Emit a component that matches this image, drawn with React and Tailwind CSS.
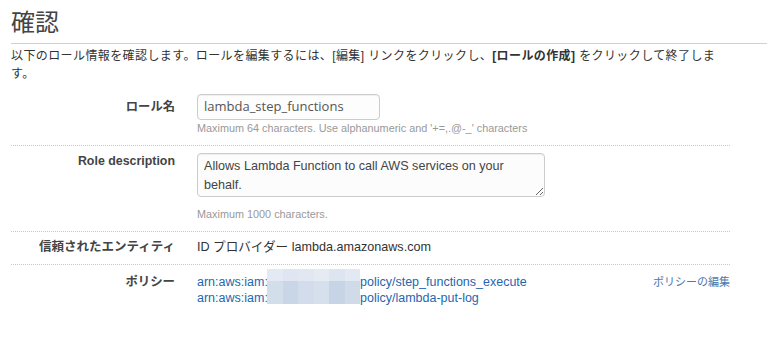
import React from "react";

const font = { fontFamily: '"Liberation Sans", "Noto Sans CJK JP", sans-serif' };

function Pixel() {
  const top = ["#e4eaf3", "#dfe6f1", "#e2e8f2", "#e6ebf3", "#dde5f0", "#e3e9f2"];
  const bot = ["#d3deeb", "#c8d6e7", "#d2dcea", "#d6dfec", "#c6d4e6", "#d0dbea"];
  return (
    <div className="w-[93px] h-[35px] -mt-[5px] flex flex-col">
      <div className="flex h-[12px]">
        {top.map((c, i) => (
          <div key={i} className="flex-1" style={{ background: c }} />
        ))}
      </div>
      <div className="flex flex-1">
        {bot.map((c, i) => (
          <div key={i} className="flex-1" style={{ background: c }} />
        ))}
      </div>
    </div>
  );
}

export default function App() {
  return (
    <div className="w-[767px] h-[354px] bg-white text-[#333]" style={font}>
      <div className="ml-[11px] pt-[8px] pb-[5px] border-b border-[#d2d2d2]">
        <h1 className="text-[24px] leading-[30px] text-[#444] font-normal">確認</h1>
      </div>
      <div className="ml-[11px] w-[719px]">
        <p className="mt-[3px] text-[12px] tracking-[0.4px] leading-[18px] text-[#333] whitespace-nowrap">
          以下のロール情報を確認します。ロールを編集するには、[編集] リンクをクリックし、
          <b className="font-bold">[ロールの作成]</b> をクリックして終了しま
          <br />
          す。
        </p>

        {/* Row 1 */}
        <div className="mt-[11px] flex pb-[9px]">
          <div className="w-[164px] text-right text-[12.3px] font-bold leading-[26px] text-[#444]">
            ロール名
          </div>
          <div className="ml-[22px] flex flex-col">
            <div
              className="w-[183px] h-[26px] border border-[#ccc] rounded-[4px] bg-[#fdfdfd] shadow-[inset_0_1px_1px_rgba(0,0,0,0.06)] pl-[6px] flex items-center text-[13px] text-[#555]"
              style={{ fontFamily: '"Open Sans", sans-serif' }}
            >
              lambda_step_functions
            </div>
            <div className="text-[10.85px] leading-[16px] text-[#999]">
              Maximum 64 characters. Use alphanumeric and '+=,.@-_' characters
            </div>
          </div>
        </div>

        {/* Row 2 */}
        <div className="border-t border-dotted border-[#c8c8c8] pt-[7px] pb-[9px] flex">
          <div className="w-[164px] text-right text-[12.4px] font-bold leading-[16px] text-[#444]">
            Role description
          </div>
          <div className="ml-[22px] flex flex-col">
            <textarea
              readOnly
              className="w-[348px] h-[44px] border border-[#ccc] rounded-[4px] bg-[#fcfcfc] shadow-[inset_0_1px_1px_rgba(0,0,0,0.06)] px-[6px] pt-[3px] text-[12.6px] leading-[19px] text-[#444] outline-none"
              style={font}
              defaultValue="Allows Lambda Function to call AWS services on your behalf."
            />
            <div className="mt-[9px] text-[10.85px] leading-[16px] text-[#999]">
              Maximum 1000 characters.
            </div>
          </div>
        </div>

        {/* Row 3 */}
        <div className="border-t border-dotted border-[#c8c8c8] pt-[6px] pb-[8px] flex items-center">
          <div className="w-[164px] text-right text-[12.5px] font-bold leading-[18px] text-[#444]">
            信頼されたエンティティ
          </div>
          <div className="ml-[22px] text-[12.6px] leading-[18px] text-[#333]">
            ID プロバイダー lambda.amazonaws.com
          </div>
        </div>

        {/* Row 4 */}
        <div className="border-t border-dotted border-[#c8c8c8] pt-[9px] flex">
          <div className="w-[164px] text-right text-[12.4px] font-bold leading-[16px] text-[#444]">
            ポリシー
          </div>
          <div className="ml-[22px] flex flex-1 text-[12.5px] leading-[16px] text-[#2466b0]">
            <div className="flex flex-col w-[70px] overflow-hidden whitespace-nowrap">
              <span>arn:aws:iam:</span>
              <span>arn:aws:iam:</span>
            </div>
            <Pixel />
            <div className="flex flex-col">
              <span>policy/step_functions_execute</span>
              <span>policy/lambda-put-log</span>
            </div>
            <div className="ml-auto text-[11px] leading-[16px] text-[#4c78ad]">
              ポリシーの編集
            </div>
          </div>
        </div>
      </div>
    </div>
  );
}
